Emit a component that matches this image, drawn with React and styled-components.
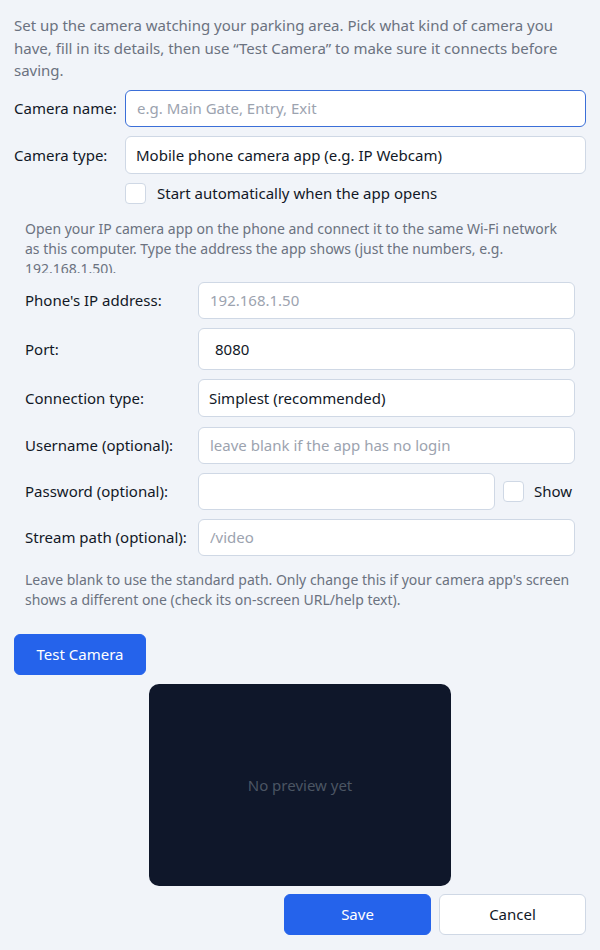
import React, { useState } from "react";
import styled, { createGlobalStyle } from "styled-components";

const GlobalStyle = createGlobalStyle`
  html, body {
    margin: 0;
    background: #f1f4f9;
  }
  body {
    font-family: "Noto Sans", "Open Sans", sans-serif;
    color: #111827;
  }
  * {
    box-sizing: border-box;
  }
`;

const Page = styled.div`
  display: flex;
  flex-direction: column;
  padding: 14px 14px 14px;
  width: 600px;
`;

const Intro = styled.p`
  margin: 0 0 8px;
  font-size: 15px;
  line-height: 22.5px;
  color: #6b7280;
`;

const FieldRow = styled.div`
  display: grid;
  grid-template-columns: ${(props) => props.labelWidth}px 1fr;
  align-items: center;
  margin-bottom: ${(props) => props.gap || 9}px;
`;

const Label = styled.label`
  font-size: 15px;
  color: #111827;
  white-space: nowrap;
`;

const TextInput = styled.input`
  width: 100%;
  height: ${(props) => (props.tall ? 42 : 37)}px;
  padding: 0 ${(props) => (props.tall ? 16 : 11)}px;
  border: 1px solid #cfd8e5;
  border-radius: 6px;
  background: #ffffff;
  font-family: inherit;
  font-size: 15px;
  color: #111827;
  outline: none;

  &::placeholder {
    color: #9ca3af;
  }

  &:focus {
    border: 1.5px solid #3b6fd8;
  }
`;

const Select = styled.select`
  width: 100%;
  height: 38px;
  padding: 0 10px;
  border: 1px solid #cfd8e5;
  border-radius: 6px;
  background: #ffffff;
  font-family: inherit;
  font-size: 15px;
  color: #111827;
  appearance: none;
  outline: none;
`;

const CheckRow = styled.label`
  display: flex;
  align-items: center;
  gap: 11px;
  margin: 0 0 7px ${(props) => props.indent || 0}px;
  font-size: 15px;
  color: #111827;
`;

const Checkbox = styled.input.attrs({ type: "checkbox" })`
  appearance: none;
  margin: 0;
  width: 21px;
  height: 21px;
  border: 1px solid #cfd8e5;
  border-radius: 4px;
  background: #ffffff;
  flex-shrink: 0;

  &:checked {
    background: #2563eb;
    border-color: #2563eb;
  }
`;

const Section = styled.div`
  padding: 8px 11px 0;
`;

const InfoText = styled.p`
  margin: 0 0 9px;
  height: 54px;
  overflow: hidden;
  font-size: 14px;
  line-height: 20px;
  color: #6b7280;
`;

const HelpText = styled.p`
  margin: 14px 0 0;
  font-size: 14px;
  line-height: 20px;
  color: #6b7280;
`;

const InlineField = styled.div`
  display: flex;
  align-items: center;
`;

const ShowToggle = styled.label`
  display: flex;
  align-items: center;
  flex-shrink: 0;
  gap: 10px;
  width: 72px;
  margin-left: 8px;
  font-size: 15px;
  color: #111827;
`;

const Button = styled.button`
  height: 41px;
  width: ${(props) => props.width}px;
  border-radius: 6px;
  font-family: inherit;
  font-size: 15px;
  cursor: pointer;
  border: 1px solid ${(props) => (props.primary ? "#2563eb" : "#cfd8e5")};
  background: ${(props) => (props.primary ? "#2563eb" : "#ffffff")};
  color: ${(props) => (props.primary ? "#ffffff" : "#111827")};
`;

const TestRow = styled.div`
  margin-top: 24px;
`;

const Preview = styled.div`
  align-self: center;
  display: flex;
  align-items: center;
  justify-content: center;
  width: 302px;
  height: 202px;
  margin-top: 9px;
  border-radius: 10px;
  background: #0f172a;
  color: #4b5563;
  font-size: 15px;
`;

const Footer = styled.div`
  display: flex;
  justify-content: flex-end;
  gap: 8px;
  margin-top: 8px;
`;

const App = () => {
  const [showPassword, setShowPassword] = useState(false);

  return (
    <>
      <GlobalStyle />
      <Page>
        <Intro>
          Set up the camera watching your parking area. Pick what kind of camera
          you have, fill in its details, then use “Test Camera” to make sure it
          connects before saving.
        </Intro>

        <FieldRow labelWidth={111}>
          <Label>Camera name:</Label>
          <TextInput autoFocus placeholder="e.g. Main Gate, Entry, Exit" />
        </FieldRow>

        <FieldRow labelWidth={111}>
          <Label>Camera type:</Label>
          <Select defaultValue="phone">
            <option value="phone">Mobile phone camera app (e.g. IP Webcam)</option>
            <option value="ip">Network IP camera</option>
            <option value="usb">USB webcam</option>
          </Select>
        </FieldRow>

        <CheckRow indent={111}>
          <Checkbox />
          Start automatically when the app opens
        </CheckRow>

        <Section>
          <InfoText>
            Open your IP camera app on the phone and connect it to the same Wi-Fi
            network as this computer. Type the address the app shows (just the
            numbers, e.g. 192.168.1.50).
          </InfoText>

          <FieldRow labelWidth={173}>
            <Label>Phone's IP address:</Label>
            <TextInput placeholder="192.168.1.50" />
          </FieldRow>

          <FieldRow labelWidth={173}>
            <Label>Port:</Label>
            <TextInput tall defaultValue="8080" />
          </FieldRow>

          <FieldRow labelWidth={173} gap={10}>
            <Label>Connection type:</Label>
            <Select defaultValue="simple">
              <option value="simple">Simplest (recommended)</option>
              <option value="mjpeg">MJPEG stream</option>
              <option value="rtsp">RTSP</option>
            </Select>
          </FieldRow>

          <FieldRow labelWidth={173}>
            <Label>Username (optional):</Label>
            <TextInput placeholder="leave blank if the app has no login" />
          </FieldRow>

          <FieldRow labelWidth={173}>
            <Label>Password (optional):</Label>
            <InlineField>
              <TextInput type={showPassword ? "text" : "password"} />
              <ShowToggle>
                <Checkbox
                  checked={showPassword}
                  onChange={(e) => setShowPassword(e.target.checked)}
                />
                Show
              </ShowToggle>
            </InlineField>
          </FieldRow>

          <FieldRow labelWidth={173}>
            <Label>Stream path (optional):</Label>
            <TextInput placeholder="/video" />
          </FieldRow>

          <HelpText>
            Leave blank to use the standard path. Only change this if your camera
            app's screen shows a different one (check its on-screen URL/help
            text).
          </HelpText>
        </Section>

        <TestRow>
          <Button primary width={132}>
            Test Camera
          </Button>
        </TestRow>

        <Preview>No preview yet</Preview>

        <Footer>
          <Button primary width={147}>
            Save
          </Button>
          <Button width={147}>Cancel</Button>
        </Footer>
      </Page>
    </>
  );
};

export default App;
